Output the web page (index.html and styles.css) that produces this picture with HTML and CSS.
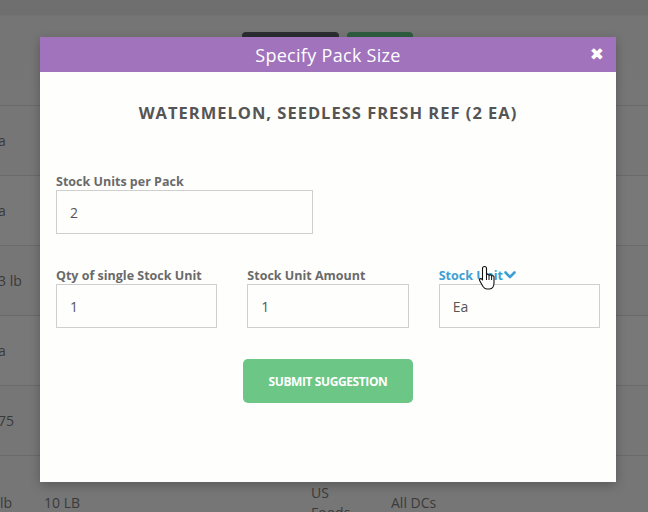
FILE: index.html
```html
<!DOCTYPE html>
<html>
<head>
<meta charset="utf-8">
<link rel="stylesheet" href="styles.css">
</head>
<body>
<div class="page">
  <div class="topbar">
    <div class="actions">
      <span class="btn-dark"></span>
      <span class="btn-green"></span>
    </div>
  </div>
  <div class="row"><span class="c1">a</span></div>
  <div class="row"><span class="c1">a</span></div>
  <div class="row"><span class="c1">3 lb</span></div>
  <div class="row"><span class="c1">a</span></div>
  <div class="row"><span class="c1">75</span></div>
  <div class="row last">
    <span class="c1">lb</span>
    <span class="c2">10 LB</span>
    <span class="c3">US<br>Foods</span>
    <span class="c4">All DCs</span>
  </div>
</div>

<div class="modal">
  <div class="modal-header">
    <span class="modal-title">Specify Pack Size</span>
    <span class="close">✖</span>
  </div>
  <div class="modal-body">
    <h2 class="product">WATERMELON, SEEDLESS FRESH REF (2 EA)</h2>
    <div class="grid two">
      <div class="field">
        <label class="lbl">Stock Units per Pack</label>
        <div class="input">2</div>
      </div>
    </div>
    <div class="grid three">
      <div class="field">
        <label class="lbl">Qty of single Stock Unit</label>
        <div class="input">1</div>
      </div>
      <div class="field">
        <label class="lbl">Stock Unit Amount</label>
        <div class="input">1</div>
      </div>
      <div class="field">
        <label class="lbl link">Stock Unit<svg class="chev" viewBox="0 0 12 8" width="12" height="8"><path d="M1.5 1.5 L6 6 L10.5 1.5" fill="none" stroke="#3d9fd3" stroke-width="2.6" stroke-linecap="round" stroke-linejoin="round"/></svg></label>
        <div class="input">Ea</div>
      </div>
    </div>
    <div class="submit-wrap">
      <button class="submit">SUBMIT SUGGESTION</button>
    </div>
  </div>
  <svg class="cursor" viewBox="0 0 20 26" width="20" height="26">
    <path d="M6.5 1.5 C7.8 1.5 8.5 2.3 8.5 3.5 L8.5 10 C8.8 9 10.8 9 11 10.5 C11.4 9.6 13.4 9.6 13.6 11.2 C14 10.4 16 10.5 16 12 L16 18 C16 21 14.5 24 11.5 24 L9 24 C7 24 6 23 5 21.5 L1.6 15.5 C1 14.4 2.4 13 3.6 14 L4.5 15 L4.5 3.5 C4.5 2.3 5.2 1.5 6.5 1.5 Z" fill="#fff" stroke="#111" stroke-width="1.1" stroke-linejoin="round"/>
    <path d="M8.5 10 L8.5 15 M11 10.5 L11 15 M13.6 11.2 L13.6 15" stroke="#111" stroke-width="1" fill="none"/>
  </svg>
</div>
</body>
</html>
```

FILE: styles.css
```css
* { box-sizing: border-box; }
html, body { margin: 0; padding: 0; }
body {
  width: 648px;
  height: 512px;
  overflow: hidden;
  background: #767676;
  font-family: "Open Sans", "Liberation Sans", sans-serif;
  position: relative;
}
.page { color: #3a3a3a; font-size: 14px; height: 512px; overflow: hidden; }
.topbar {
  height: 106px;
  background: linear-gradient(#6f6f6f 0, #6f6f6f 15px, #757575 16px, #767676 106px);
  border-bottom: 1px solid #6a6a6a;
}
.actions { display: flex; gap: 8px; padding: 32px 0 0 242px; }
.btn-dark { width: 97px; height: 30px; border-radius: 4px; background: #2b2d33; }
.btn-green { width: 66px; height: 30px; border-radius: 4px; background: #2f5e40; }
.row {
  height: 70px;
  border-bottom: 1px solid #6a6a6a;
  display: flex;
  align-items: center;
  position: relative;
}
.row:nth-child(odd) { background: #787878; }
.c1 { margin-left: -2px; }
.row.last { height: 60px; align-items: flex-start; padding-top: 37px; background: #767676; border-bottom: none; }
.row.last .c1 { margin-left: 0; }
.c2 { position: absolute; left: 44px; top: 37px; }
.c3 { position: absolute; left: 311px; top: 27px; line-height: 20px; }
.c4 { position: absolute; left: 391px; top: 37px; }

.modal {
  position: absolute;
  left: 40px;
  top: 37px;
  width: 576px;
  height: 445px;
  background: #fefefd;
  box-shadow: 0 3px 10px rgba(0,0,0,0.25);
}
.modal-header {
  height: 35px;
  background: #a173bc;
  display: flex;
  align-items: center;
  justify-content: center;
  position: relative;
}
.modal-title {
  color: #fff;
  font-size: 18px;
  letter-spacing: 0.3px;
}
.close {
  position: absolute;
  right: 12px;
  top: 7px;
  color: #fff;
  font-family: "DejaVu Sans", sans-serif;
  font-size: 17px;
  font-weight: bold;
  line-height: 20px;
}
.modal-body { padding: 0 16px; }
.product {
  margin: 31px 0 0;
  text-align: center;
  font-size: 16.5px;
  line-height: 20px;
  font-weight: 700;
  color: #555;
  letter-spacing: 1px;
}
.grid { display: grid; column-gap: 30px; }
.grid.two { grid-template-columns: 1fr 1fr; margin-top: 51px; }
.grid.three { grid-template-columns: 1fr 1fr 1fr; margin-top: 34px; }
.field { display: flex; flex-direction: column; }
.lbl {
  font-size: 12.5px;
  line-height: 16px;
  font-weight: 700;
  color: #6a6a6a;
  display: flex;
  align-items: center;
}
.lbl.link { color: #3d9fd3; }
.chev { margin-left: 1px; margin-top: -2px; }
.input {
  height: 44px;
  border: 1px solid #cfcfcf;
  padding: 0 13px;
  display: flex;
  align-items: center;
  font-size: 14px;
  color: #555;
}
.submit-wrap { display: flex; justify-content: center; margin-top: 31px; }
.submit {
  width: 170px;
  height: 44px;
  border: none;
  border-radius: 5px;
  background: #6cc686;
  color: #fff;
  font-family: "Open Sans", sans-serif;
  font-weight: 700;
  font-size: 12px;
  letter-spacing: -0.4px;
}
.cursor { position: absolute; left: 438px; top: 228px; }
```
